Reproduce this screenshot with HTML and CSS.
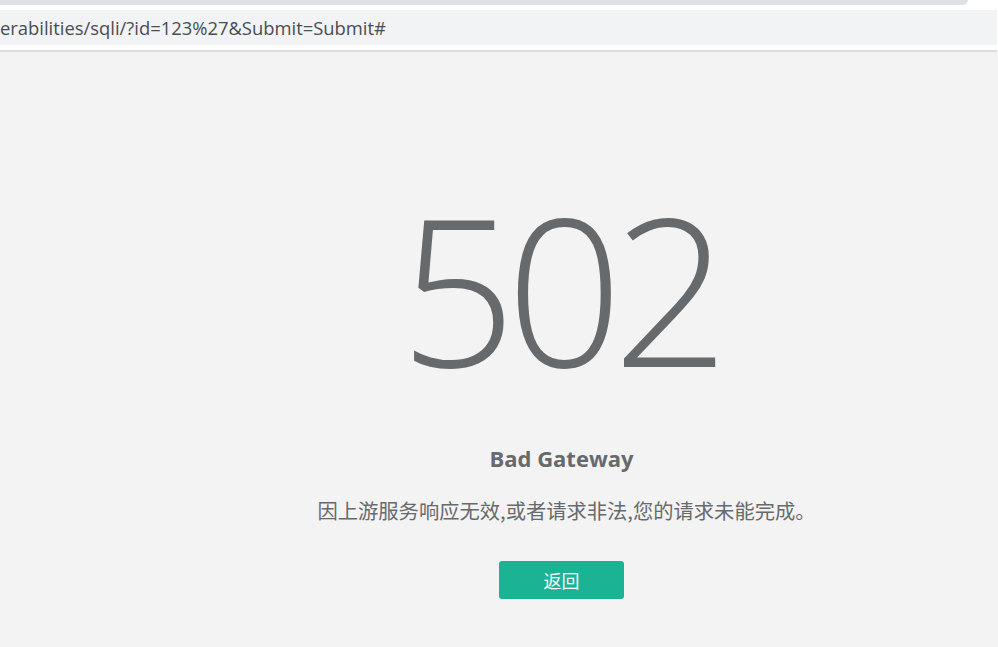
FILE: index.html
```html
<!DOCTYPE html>
<html lang="zh-CN">
<head>
<meta charset="utf-8">
<title>502 Bad Gateway</title>
<link rel="stylesheet" href="styles.css">
</head>
<body>
<header class="chrome">
  <div class="tabstrip"><div class="tabstrip-fill"></div></div>
  <div class="toolbar">
    <div class="omnibox"><span class="url">erabilities/sqli/?id=123%27&amp;Submit=Submit#</span></div>
  </div>
  <div class="toolbar-sep"></div>
</header>
<main class="page">
  <div class="middle-box">
    <h1 class="code">502</h1>
    <h3 class="title">Bad Gateway</h3>
    <p class="message">因上游服务响应无效,或者请求非法,您的请求未能完成。</p>
    <a class="btn-back" href="#">返回</a>
  </div>
</main>
</body>
</html>
```
FILE: styles.css
```css
html, body {
  margin: 0;
  padding: 0;
  height: 100%;
  overflow: hidden;
  background: #f3f3f4;
}

.chrome {
  background: #ffffff;
}

.tabstrip {
  height: 5px;
  background: #ffffff;
}

.tabstrip-fill {
  width: 968px;
  height: 5px;
  background: #dee1e6;
  border-bottom-right-radius: 5px;
}

.toolbar {
  padding: 5px 1px 5px 0;
  background: #ffffff;
}

.omnibox {
  height: 35px;
  background: #f1f3f4;
  display: flex;
  align-items: center;
  overflow: hidden;
}

.url {
  font-family: "Open Sans", "Noto Sans", sans-serif;
  font-size: 18.4px;
  color: #4a4d51;
  white-space: nowrap;
  padding-left: 0;
}

.toolbar-sep {
  height: 2px;
  background: #dadce0;
  margin-right: 1px;
}

.page {
  padding-left: 125px;
  background: #f3f3f4;
}

.middle-box {
  display: flex;
  flex-direction: column;
  align-items: center;
  color: #676a6c;
}

.code {
  margin: 134px 0 0 0;
  font-family: "Open Sans", "Segoe UI", sans-serif;
  font-weight: 300;
  font-size: 204px;
  line-height: 204px;
  letter-spacing: -10px;
  padding-right: 4px;
  color: #676a6c;
}

.title {
  margin: 57px 0 0 0;
  font-family: "Open Sans", "Noto Sans", sans-serif;
  font-weight: 700;
  font-size: 22px;
  line-height: 22px;
  color: #676a6c;
}

.message {
  margin: 29px 0 0 0;
  padding-left: 10px;
  font-family: "Noto Sans CJK SC", sans-serif;
  font-size: 20.3px;
  line-height: 24px;
  color: #676a6c;
}

.btn-back {
  margin-top: 39px;
  width: 125px;
  height: 38px;
  border-radius: 3px;
  background: #1ab394;
  color: #ffffff;
  font-family: "Noto Sans CJK SC", sans-serif;
  font-size: 18px;
  text-decoration: none;
  display: flex;
  align-items: center;
  justify-content: center;
}
```
